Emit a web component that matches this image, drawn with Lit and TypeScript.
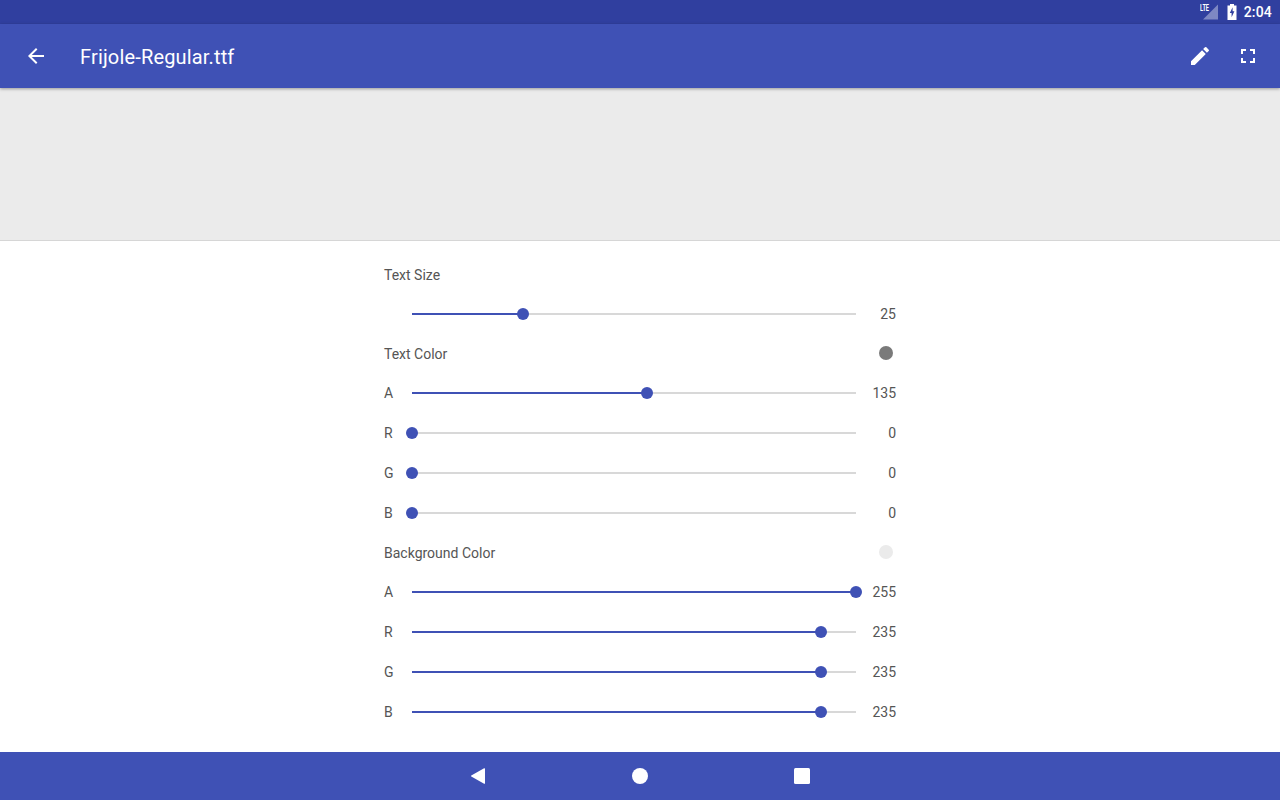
import { LitElement, html, css } from "lit";
import { customElement } from "lit/decorators.js";

type Row =
  | { kind: "title"; label: string; swatch?: string }
  | { kind: "slider"; label: string; value: number; max: number };

const ROWS: Row[] = [
  { kind: "title", label: "Text Size" },
  { kind: "slider", label: "", value: 25, max: 100 },
  { kind: "title", label: "Text Color", swatch: "#7a7a7a" },
  { kind: "slider", label: "A", value: 135, max: 255 },
  { kind: "slider", label: "R", value: 0, max: 255 },
  { kind: "slider", label: "G", value: 0, max: 255 },
  { kind: "slider", label: "B", value: 0, max: 255 },
  { kind: "title", label: "Background Color", swatch: "#ebebeb" },
  { kind: "slider", label: "A", value: 255, max: 255 },
  { kind: "slider", label: "R", value: 235, max: 255 },
  { kind: "slider", label: "G", value: 235, max: 255 },
  { kind: "slider", label: "B", value: 235, max: 255 },
];

@customElement("app-root")
export class AppRoot extends LitElement {
  static styles = css`
    :host {
      display: flex;
      flex-direction: column;
      width: 1280px;
      height: 800px;
      overflow: hidden;
      background: #fff;
      font-family: Roboto, "Liberation Sans", sans-serif;
    }
    .status {
      height: 24px;
      flex: none;
      background: #303f9f;
      display: flex;
      align-items: center;
      justify-content: flex-end;
      color: #fff;
      padding-right: 8px;
    }
    .net {
      position: relative;
      width: 18px;
      height: 16px;
      margin-right: 9px;
    }
    .net svg { display: block; }
    .lte {
      position: absolute;
      left: 0;
      top: 0;
      font-size: 9px;
      line-height: 8px;
      font-weight: 700;
      color: #fff;
      transform: scaleX(0.62);
      transform-origin: left top;
    }
    .batt { display: block; margin-right: 7px; }
    .time {
      font-size: 14px;
      font-weight: 500;
      letter-spacing: 0.2px;
    }
    .bar {
      height: 64px;
      flex: none;
      background: #3f51b5;
      display: flex;
      align-items: center;
      color: #fff;
      position: relative;
      z-index: 1;
      box-shadow: 0 1px 3px rgba(0, 0, 0, 0.35);
    }
    .bar svg { display: block; fill: #fff; }
    .back { margin-left: 24px; width: 24px; height: 24px; }
    .title {
      margin-left: 32px;
      padding-top: 2px;
      font-size: 20px;
      letter-spacing: 0.16px;
      flex: 1;
    }
    .act { width: 24px; height: 24px; margin-left: 24px; }
    .acts { display: flex; margin-right: 20px; }
    .preview {
      height: 153px;
      flex: none;
      box-sizing: border-box;
      background: #ebebeb;
      border-bottom: 1px solid #d6d6d6;
    }
    .controls {
      flex: 1;
      width: 512px;
      margin: 0 auto;
      padding-top: 14px;
      box-sizing: border-box;
      color: #555;
      font-size: 14px;
    }
    .t-row {
      height: 39px;
      display: flex;
      align-items: center;
      justify-content: space-between;
    }
    .swatch {
      width: 14px;
      height: 14px;
      border-radius: 50%;
      margin: 0 3px 2px 0;
    }
    .s-row {
      height: 40px;
      display: flex;
      align-items: center;
    }
    .s-label { width: 28px; flex: none; }
    .track {
      flex: none;
      width: 444px;
      height: 2px;
      background: #d8d8d8;
      position: relative;
    }
    .fill {
      position: absolute;
      left: 0;
      top: 0;
      height: 2px;
      background: #3f51b5;
    }
    .thumb {
      position: absolute;
      top: -5px;
      width: 12px;
      height: 12px;
      margin-left: -6px;
      border-radius: 50%;
      background: #3f51b5;
    }
    .val { flex: 1; text-align: right; }
    .nav {
      height: 48px;
      flex: none;
      background: #3f51b5;
      display: flex;
      align-items: center;
      justify-content: center;
      gap: 138px;
    }
    .nav svg { display: block; fill: #fff; width: 24px; height: 24px; }
  `;

  private row(r: Row) {
    if (r.kind === "title") {
      return html`<div class="t-row">
        <span>${r.label}</span>
        ${r.swatch
          ? html`<span class="swatch" style="background:${r.swatch}"></span>`
          : null}
      </div>`;
    }
    const pct = (r.value / r.max) * 100;
    return html`<div class="s-row">
      <span class="s-label">${r.label}</span>
      <div class="track">
        <div class="fill" style="width:${pct}%"></div>
        <div class="thumb" style="left:${pct}%"></div>
      </div>
      <span class="val">${r.value}</span>
    </div>`;
  }

  render() {
    return html`
      <div class="status">
        <div class="net">
          <svg width="18" height="16" viewBox="0 0 18 16">
            <path d="M18 .5V15.5H3Z" fill="#fff" fill-opacity="0.38" />
          </svg>
          <span class="lte">LTE</span>
        </div>
        <svg class="batt" width="10" height="16" viewBox="0 0 10 16">
          <path fill="#fff" d="M3 0H7V1.5H9.5V16H.5V1.5H3Z" />
          <path fill="#303f9f" d="M5.6 3.2 2.8 9H4.6V13.2L7.4 7.2H5.6Z" />
        </svg>
        <span class="time">2:04</span>
      </div>
      <div class="bar">
        <svg class="back" viewBox="0 0 24 24">
          <path d="M20 11H7.83l5.59-5.59L12 4l-8 8 8 8 1.41-1.41L7.83 13H20v-2z" />
        </svg>
        <div class="title">Frijole-Regular.ttf</div>
        <div class="acts">
          <svg class="act" viewBox="0 0 24 24">
            <path d="M3 17.25V21h3.75L17.81 9.94l-3.75-3.75L3 17.25zM20.71 7.04a1 1 0 0 0 0-1.41l-2.34-2.34a1 1 0 0 0-1.41 0l-1.83 1.83 3.75 3.75 1.83-1.83z" />
          </svg>
          <svg class="act" viewBox="0 0 24 24">
            <path d="M7 14H5v5h5v-2H7v-3zm-2-4h2V7h3V5H5v5zm12 7h-3v2h5v-5h-2v3zM14 5v2h3v3h2V5h-5z" />
          </svg>
        </div>
      </div>
      <div class="preview"></div>
      <div class="controls">${ROWS.map((r) => this.row(r))}</div>
      <div class="nav">
        <svg viewBox="0 0 24 24">
          <path d="M18.4 4.2a.6.6 0 0 1 .6.6V19.2a.6.6 0 0 1-.9.5L5.3 12.500a.6.6 0 0 1 0-1L18.100 4.300Z" />
        </svg>
        <svg viewBox="0 0 24 24"><circle cx="12" cy="12" r="8" /></svg>
        <svg viewBox="0 0 24 24"><rect x="4" y="4" width="16" height="16" rx="1.500" /></svg>
      </div>
    `;
  }
}
